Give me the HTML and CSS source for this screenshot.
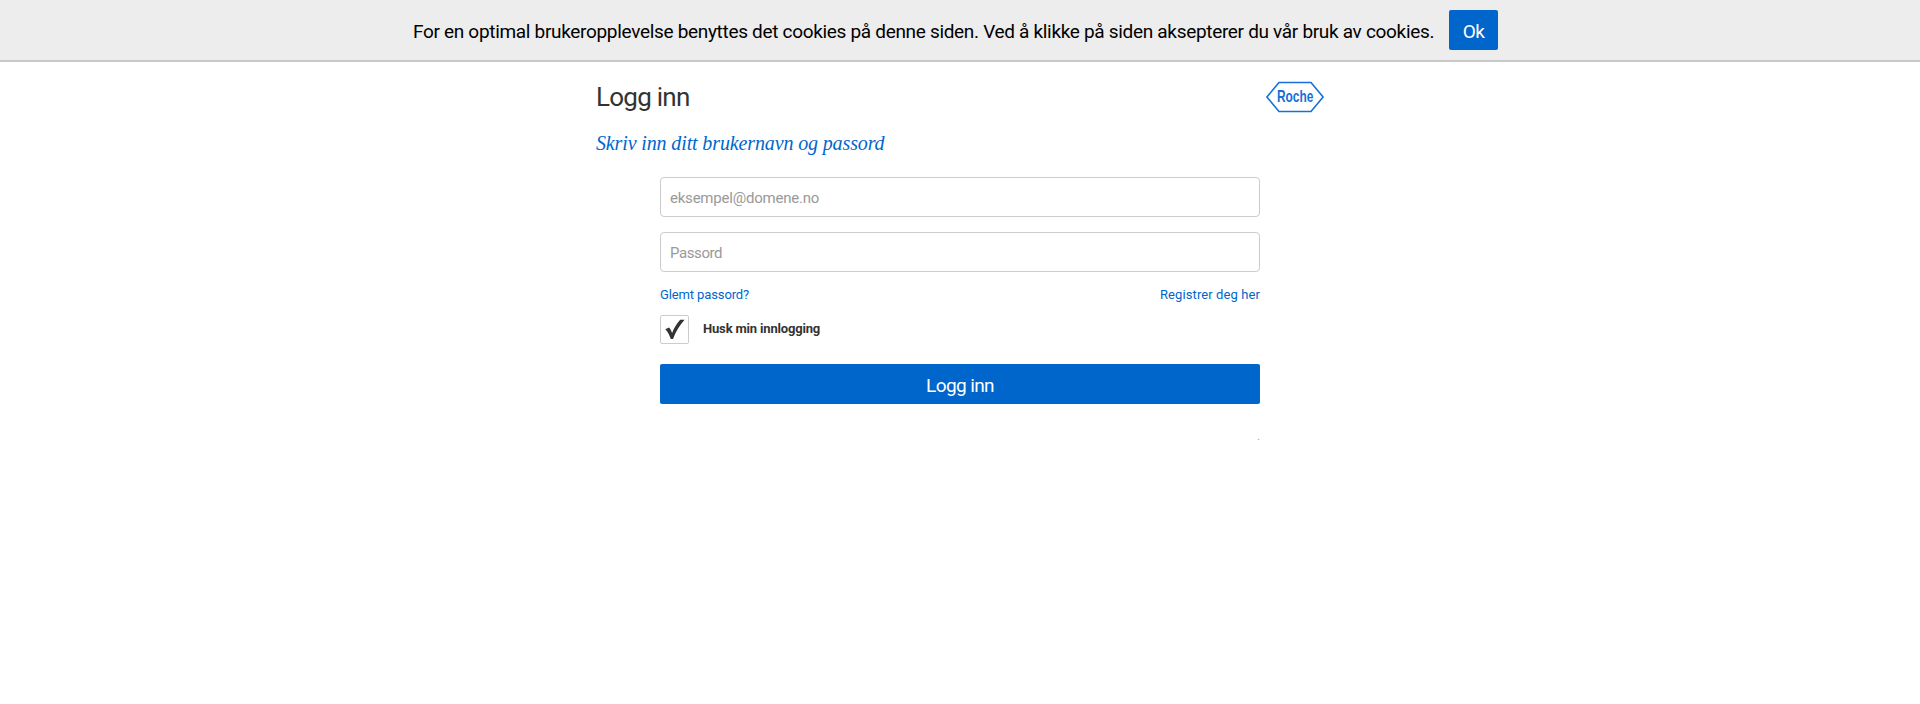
FILE: index.html
```html
<!DOCTYPE html>
<html lang="no">
<head>
<meta charset="utf-8">
<title>Logg inn</title>
<link rel="stylesheet" href="styles.css">
</head>
<body>
<div class="cookie-bar">
  <span class="cookie-text">For en optimal brukeropplevelse benyttes det cookies på denne siden. Ved å klikke på siden aksepterer du vår bruk av cookies.</span>
  <button class="cookie-ok">Ok</button>
</div>
<main class="page">
  <header class="header">
    <h1 class="title">Logg inn</h1>
    <svg class="logo" width="60" height="32" viewBox="0 0 60 32" role="img" aria-label="Roche">
      <path d="M1.9 16 14 1.5H46L58.1 16 46 30.5H14Z" fill="none" stroke="#1670d6" stroke-width="1.6"/>
      <text class="logo-text" transform="translate(12 21) scale(.79 1)" x="0" y="0" textLength="46" lengthAdjust="spacingAndGlyphs">Roche</text>
    </svg>
  </header>
  <h2 class="subtitle">Skriv inn ditt brukernavn og passord</h2>
  <form class="form">
    <input class="field field-email" type="text" placeholder="eksempel@domene.no">
    <input class="field field-password" type="password" placeholder="Passord">
    <div class="links">
      <a class="link link-forgot">Glemt passord?</a>
      <a class="link link-register">Registrer deg her</a>
    </div>
    <label class="remember">
      <span class="checkbox">
        <svg width="21" height="21" viewBox="0 0 21 21"><path d="M.3 10.3 4 8.6C5.3 9.8 6.4 12 7.1 14 9.2 8.6 12 4.3 15.2.8H19.6C14.8 6 10.8 12.4 8 20H5.8C4.4 16.4 2.8 12.5.3 10.3Z" fill="#333"/></svg>
      </span>
      <span class="remember-text">Husk min innlogging</span>
    </label>
    <button class="submit" type="button"><span class="submit-text">Logg inn</span></button>
    <div class="footnote">.</div>
  </form>
</main>
</body>
</html>
```
FILE: styles.css
```css
* { box-sizing: border-box; }
body {
  margin: 0;
  background: #fff;
  color: #333;
  font-family: Roboto, "Liberation Sans", Arial, sans-serif;
}
.cookie-bar {
  display: flex;
  height: 62px;
  padding: 10px 422px 0 413px;
  justify-content: space-between;
  background: #ededed;
  border-bottom: 2px solid #c8c8c8;
  color: #000;
}
.cookie-text {
  font-size: 19px;
  line-height: 43px;
  letter-spacing: -0.315px;
  white-space: nowrap;
}
.cookie-ok, .submit {
  height: 40px;
  border: 0;
  border-radius: 2px;
  background: #0066cc;
  color: #fff;
  font: 400 19px/43px Roboto, "Liberation Sans", sans-serif;
  letter-spacing: -0.6px;
  padding: 0;
}
.cookie-ok { width: 49px; flex: none; }
.page { width: 728px; margin: 0 auto; }
.header {
  display: flex;
  justify-content: space-between;
  height: 70px;
  padding-top: 19px;
}
.title {
  margin: 0;
  font-size: 26px;
  font-weight: 400;
  line-height: 32px;
  letter-spacing: -0.75px;
}
.logo { margin-right: -1px; }
.logo-text {
  font: bold 16.5px "Liberation Sans", Arial, sans-serif;
  fill: #1670d6;
}
.subtitle {
  margin: 0;
  height: 45px;
  color: #0066cc;
  font: italic 400 20px/22px "Liberation Serif", serif;
  letter-spacing: -0.13px;
}
.form {
  display: flex;
  flex-direction: column;
  width: 600px;
  margin: 0 auto;
}
.field {
  height: 40px;
  margin: 0 0 15px;
  padding: 1px 9px 0;
  border: 1px solid #ccc;
  border-radius: 4px;
  background: #fff;
  font: 15px Roboto, "Liberation Sans", sans-serif;
  letter-spacing: -0.22px;
}
.field::placeholder { color: #999; }
.field-password { letter-spacing: -0.4px; }
.links {
  display: flex;
  justify-content: space-between;
  height: 28px;
  line-height: 16px;
}
.link { color: #0066cc; font-size: 13px; }
.link-forgot { letter-spacing: -0.12px; }
.link-register { letter-spacing: 0.1px; }
.remember {
  display: flex;
  gap: 14px;
  height: 49px;
}
.checkbox {
  display: flex;
  width: 29px;
  height: 29px;
  padding: 3px 0 0 4px;
  border: 1px solid #ccc;
  border-radius: 2px;
}
.remember-text {
  font-size: 13px;
  font-weight: 700;
  line-height: 28px;
  letter-spacing: -0.17px;
}
.submit { width: 600px; }
.footnote {
  margin-top: 27px;
  text-align: right;
  font-size: 10px;
  line-height: 12px;
  color: #999;
}
```
